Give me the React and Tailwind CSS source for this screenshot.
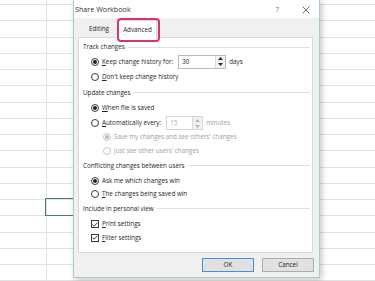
import React from 'react';

const line = 'border-[#e2e2e2]';

function Radio({ checked, disabled }) {
    return (
        <span className={`flex h-[8px] w-[8px] shrink-0 items-center justify-center rounded-full border bg-white ${disabled ? 'border-[#c8c8c8]' : 'border-[#3a3a3a]'}`}>
            {checked && <span className={`h-[4px] w-[4px] rounded-full ${disabled ? 'bg-[#b8b8b8]' : 'bg-[#1f1f1f]'}`} />}
        </span>
    );
}

function Check() {
    return (
        <span className="flex h-[8px] w-[8px] shrink-0 items-center justify-center border border-[#3a3a3a] bg-white">
            <svg width="6" height="5" viewBox="0 0 6 5">
                <path d="M0.5 2.6 L2.2 4.2 L5.5 0.6" fill="none" stroke="#222" strokeWidth="0.9" />
            </svg>
        </span>
    );
}

function Spinner({ value, disabled, w }) {
    const c = disabled ? '#b5b5b5' : '#2a2a2a';
    return (
        <div className={`flex h-[14px] border bg-white ${w} ${disabled ? 'border-[#d6d6d6]' : 'border-[#b9b9b9]'}`}>
            <div className={`flex flex-1 items-center pl-[3px] ${disabled ? 'text-[#a8a8a8]' : 'text-[#1f1f1f]'}`}>{value}</div>
            <div className="flex w-[10px] flex-col border-l border-[#dadada] bg-[#f2f2f2]">
                <div className="flex flex-1 items-center justify-center">
                    <svg width="5" height="3" viewBox="0 0 5 3"><path d="M0 3 L2.5 0 L5 3Z" fill={c} /></svg>
                </div>
                <div className="flex flex-1 items-center justify-center">
                    <svg width="5" height="3" viewBox="0 0 5 3"><path d="M0 0 L2.5 3 L5 0Z" fill={c} /></svg>
                </div>
            </div>
        </div>
    );
}

function Header({ h, children }) {
    return (
        <div className={`flex items-center gap-[3px] pl-[4px] pr-[2px] ${h}`}>
            <span className="whitespace-nowrap">{children}</span>
            <div className="h-px flex-1 bg-[#dedede]" />
        </div>
    );
}

function Option({ h, checked, disabled, sub, u, rest, children }) {
    return (
        <div className={`flex items-center gap-[3px] ${sub ? 'pl-[24px]' : 'pl-[12px]'} ${h}`}>
            <Radio checked={checked} disabled={disabled} />
            <span className={`whitespace-nowrap ${disabled ? 'text-[#a0a0a0]' : ''}`}>
                {u && <span className="underline">{u}</span>}
                {rest}
            </span>
            {children}
        </div>
    );
}

function Box({ h, u, rest }) {
    return (
        <div className={`flex items-center gap-[3px] pl-[12px] ${h}`}>
            <Check />
            <span className="whitespace-nowrap">
                <span className="underline">{u}</span>
                {rest}
            </span>
        </div>
    );
}

export default function App() {
    return (
        <div className="relative h-[281px] w-[375px] overflow-hidden bg-white font-['Open_Sans',sans-serif] text-[6.3px] text-[#1f1f1f]">
            {/* sheet behind */}
            <div className="flex flex-col">
                <div className={`flex h-[5px] border-b ${line}`}>
                    <div className={`w-[47px] border-r ${line}`} />
                </div>
                {Array.from({ length: 17 }).map((_, i) => (
                    <div key={i} className={`flex h-[16.25px] shrink-0 border-b ${line}`}>
                        <div className={`w-[47px] border-r ${line}`} />
                    </div>
                ))}
            </div>
            <div className="absolute left-[45px] top-[198px] h-[18px] w-[40px] border-[1.5px] border-[#4a7c62]" />

            {/* dialog */}
            <div className="absolute left-[73px] top-[-1px] flex h-[279px] w-[247px] flex-col border border-[#a9c9d4] bg-[#f0f0f0] shadow-[2px_2px_6px_rgba(0,0,0,0.22)]">
                <div className="flex h-[18px] items-center bg-white pl-[1px] pt-[1px] text-[7.2px] text-[#333]">
                    <span>Share Workbook</span>
                    <span className="ml-auto mr-[23px] text-[7.5px] text-[#666]">?</span>
                    <svg width="8" height="8" viewBox="0 0 8 8" className="mr-[9px]">
                        <path d="M0.5 0.5 L7.5 7.5 M7.5 0.5 L0.5 7.5" stroke="#444" strokeWidth="0.8" />
                    </svg>
                </div>

                <div className="relative z-10 -mb-px mt-[2px] flex h-[18px] pl-[6px]">
                    <div className="flex w-[38px] items-center justify-center">Editing</div>
                    <div className="relative flex w-[39px] items-center justify-center border border-b-0 border-[#d9d9d9] bg-white">
                        Advanced
                        <div className="absolute left-[-2px] top-[-3px] h-[24px] w-[43px] rounded-[4px] border-2 border-[#d8336a]" />
                    </div>
                </div>

                <div className="ml-[4px] flex h-[216px] w-[235px] flex-col border border-[#d9d9d9] bg-white pt-[2px]">
                    <Header h="h-[14px]">Track changes</Header>
                    <Option h="h-[15px]" checked u="K" rest="eep change history for:">
                        <div className="ml-[2px] flex items-center gap-[3px]">
                            <Spinner value="30" w="w-[48px]" />
                            <span>days</span>
                        </div>
                    </Option>
                    <Option h="h-[16px]" u="D" rest="on't keep change history" />

                    <Header h="h-[15px]">Update changes</Header>
                    <Option h="h-[16px]" checked u="W" rest="hen file is saved" />
                    <Option h="h-[14px]" u="A" rest="utomatically every:">
                        <div className="ml-[2px] flex items-center gap-[3px] text-[#a0a0a0]">
                            <Spinner value="15" disabled w="w-[37px]" />
                            <span>minutes</span>
                        </div>
                    </Option>
                    <Option h="h-[14px]" sub checked disabled rest="Save my changes and see others' changes" />
                    <Option h="h-[13px]" sub disabled rest="Just see other users' changes" />

                    <Header h="h-[17px]">Conflicting changes between users</Header>
                    <Option h="h-[13px]" checked rest="Ask me which changes win" />
                    <Option h="h-[13px]" u="T" rest="he changes being saved win" />

                    <Header h="h-[17px]">Include in personal view</Header>
                    <Box h="h-[14px]" u="P" rest="rint settings" />
                    <Box h="h-[13px]" u="F" rest="ilter settings" />
                </div>

                <div className="flex flex-1 items-center justify-end gap-[8px] pr-[5px]">
                    <button className="h-[14px] w-[52px] border border-[#4a8fd6] bg-[#e1e1e1] text-[6.3px] text-[#1f1f1f]">OK</button>
                    <button className="h-[14px] w-[52px] border border-[#adadad] bg-[#e1e1e1] text-[6.3px] text-[#1f1f1f]">Cancel</button>
                </div>
            </div>
        </div>
    );
}
